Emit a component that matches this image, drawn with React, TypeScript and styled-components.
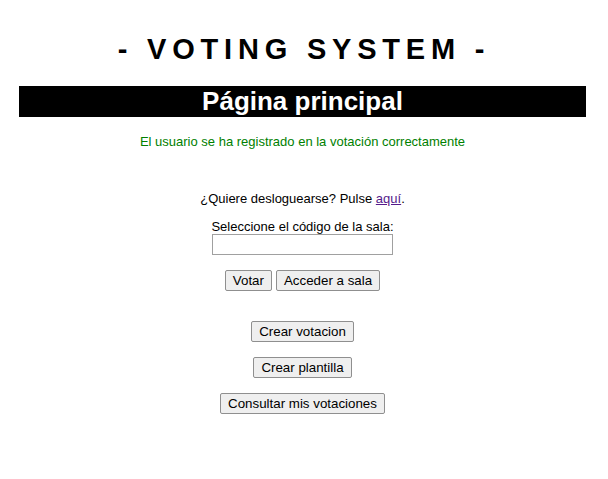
import styled, { createGlobalStyle } from 'styled-components';

const Global = createGlobalStyle`
    body {
        margin: 0;
        background: #fff;
        font-family: "Liberation Sans", Arial, sans-serif;
        color: #000;
    }
`;

const Page = styled.div`
    display: flex;
    flex-direction: column;
    align-items: center;
    padding: 30px 3px 0 0;
`;

const Title = styled.h1`
    margin: 0 0 18px 3px;
    font-size: 29px;
    font-weight: bold;
    letter-spacing: 0.2em;
    line-height: 38px;
`;

const Banner = styled.h2`
    align-self: stretch;
    margin: 0 19px 0 19px;
    background: #000;
    color: #fff;
    font-size: 26px;
    font-weight: bold;
    line-height: 31px;
    text-align: center;
`;

const Notice = styled.p`
    margin: 17px 0 0;
    color: #008000;
    font-size: 13px;
    line-height: 15px;
`;

const Text = styled.p`
    margin: 42px 0 0;
    font-size: 13px;
    line-height: 15px;
`;

const Link = styled.a`
    color: #551a8b;
`;

const Form = styled.form`
    display: flex;
    flex-direction: column;
    align-items: center;
    margin-top: 13px;
`;

const Label = styled.label`
    font-size: 13px;
    line-height: 15px;
`;

const Input = styled.input`
    box-sizing: border-box;
    width: 181px;
    height: 21px;
    margin: 0;
    border: 1px solid #a0a0a0;
    background: #fff;
`;

const Row = styled.div<{ $top: number }>`
    display: flex;
    gap: 4px;
    justify-content: center;
    margin-top: ${p => p.$top}px;
`;

const Button = styled.button`
    box-sizing: border-box;
    height: 21px;
    padding: 0 7px;
    font-family: "Liberation Sans", Arial, sans-serif;
    font-size: 13.33px;
    color: #000;
    background: #efefef;
    border: 1px solid #8f8f8f;
    border-radius: 2px;
`;

export default function App() {
    return (
        <Page>
            <Global />
            <Title>- VOTING SYSTEM -</Title>
            <Banner>Página principal</Banner>
            <Notice>El usuario se ha registrado en la votación correctamente</Notice>
            <Text>
                ¿Quiere desloguearse? Pulse <Link href="#">aquí</Link>.
            </Text>
            <Form onSubmit={e => e.preventDefault()}>
                <Label htmlFor="sala">Seleccione el código de la sala:</Label>
                <Input id="sala" type="text" />
                <Row $top={15}>
                    <Button>Votar</Button>
                    <Button>Acceder a sala</Button>
                </Row>
            </Form>
            <Row $top={30}>
                <Button>Crear votacion</Button>
            </Row>
            <Row $top={15}>
                <Button>Crear plantilla</Button>
            </Row>
            <Row $top={15}>
                <Button>Consultar mis votaciones</Button>
            </Row>
        </Page>
    );
}
